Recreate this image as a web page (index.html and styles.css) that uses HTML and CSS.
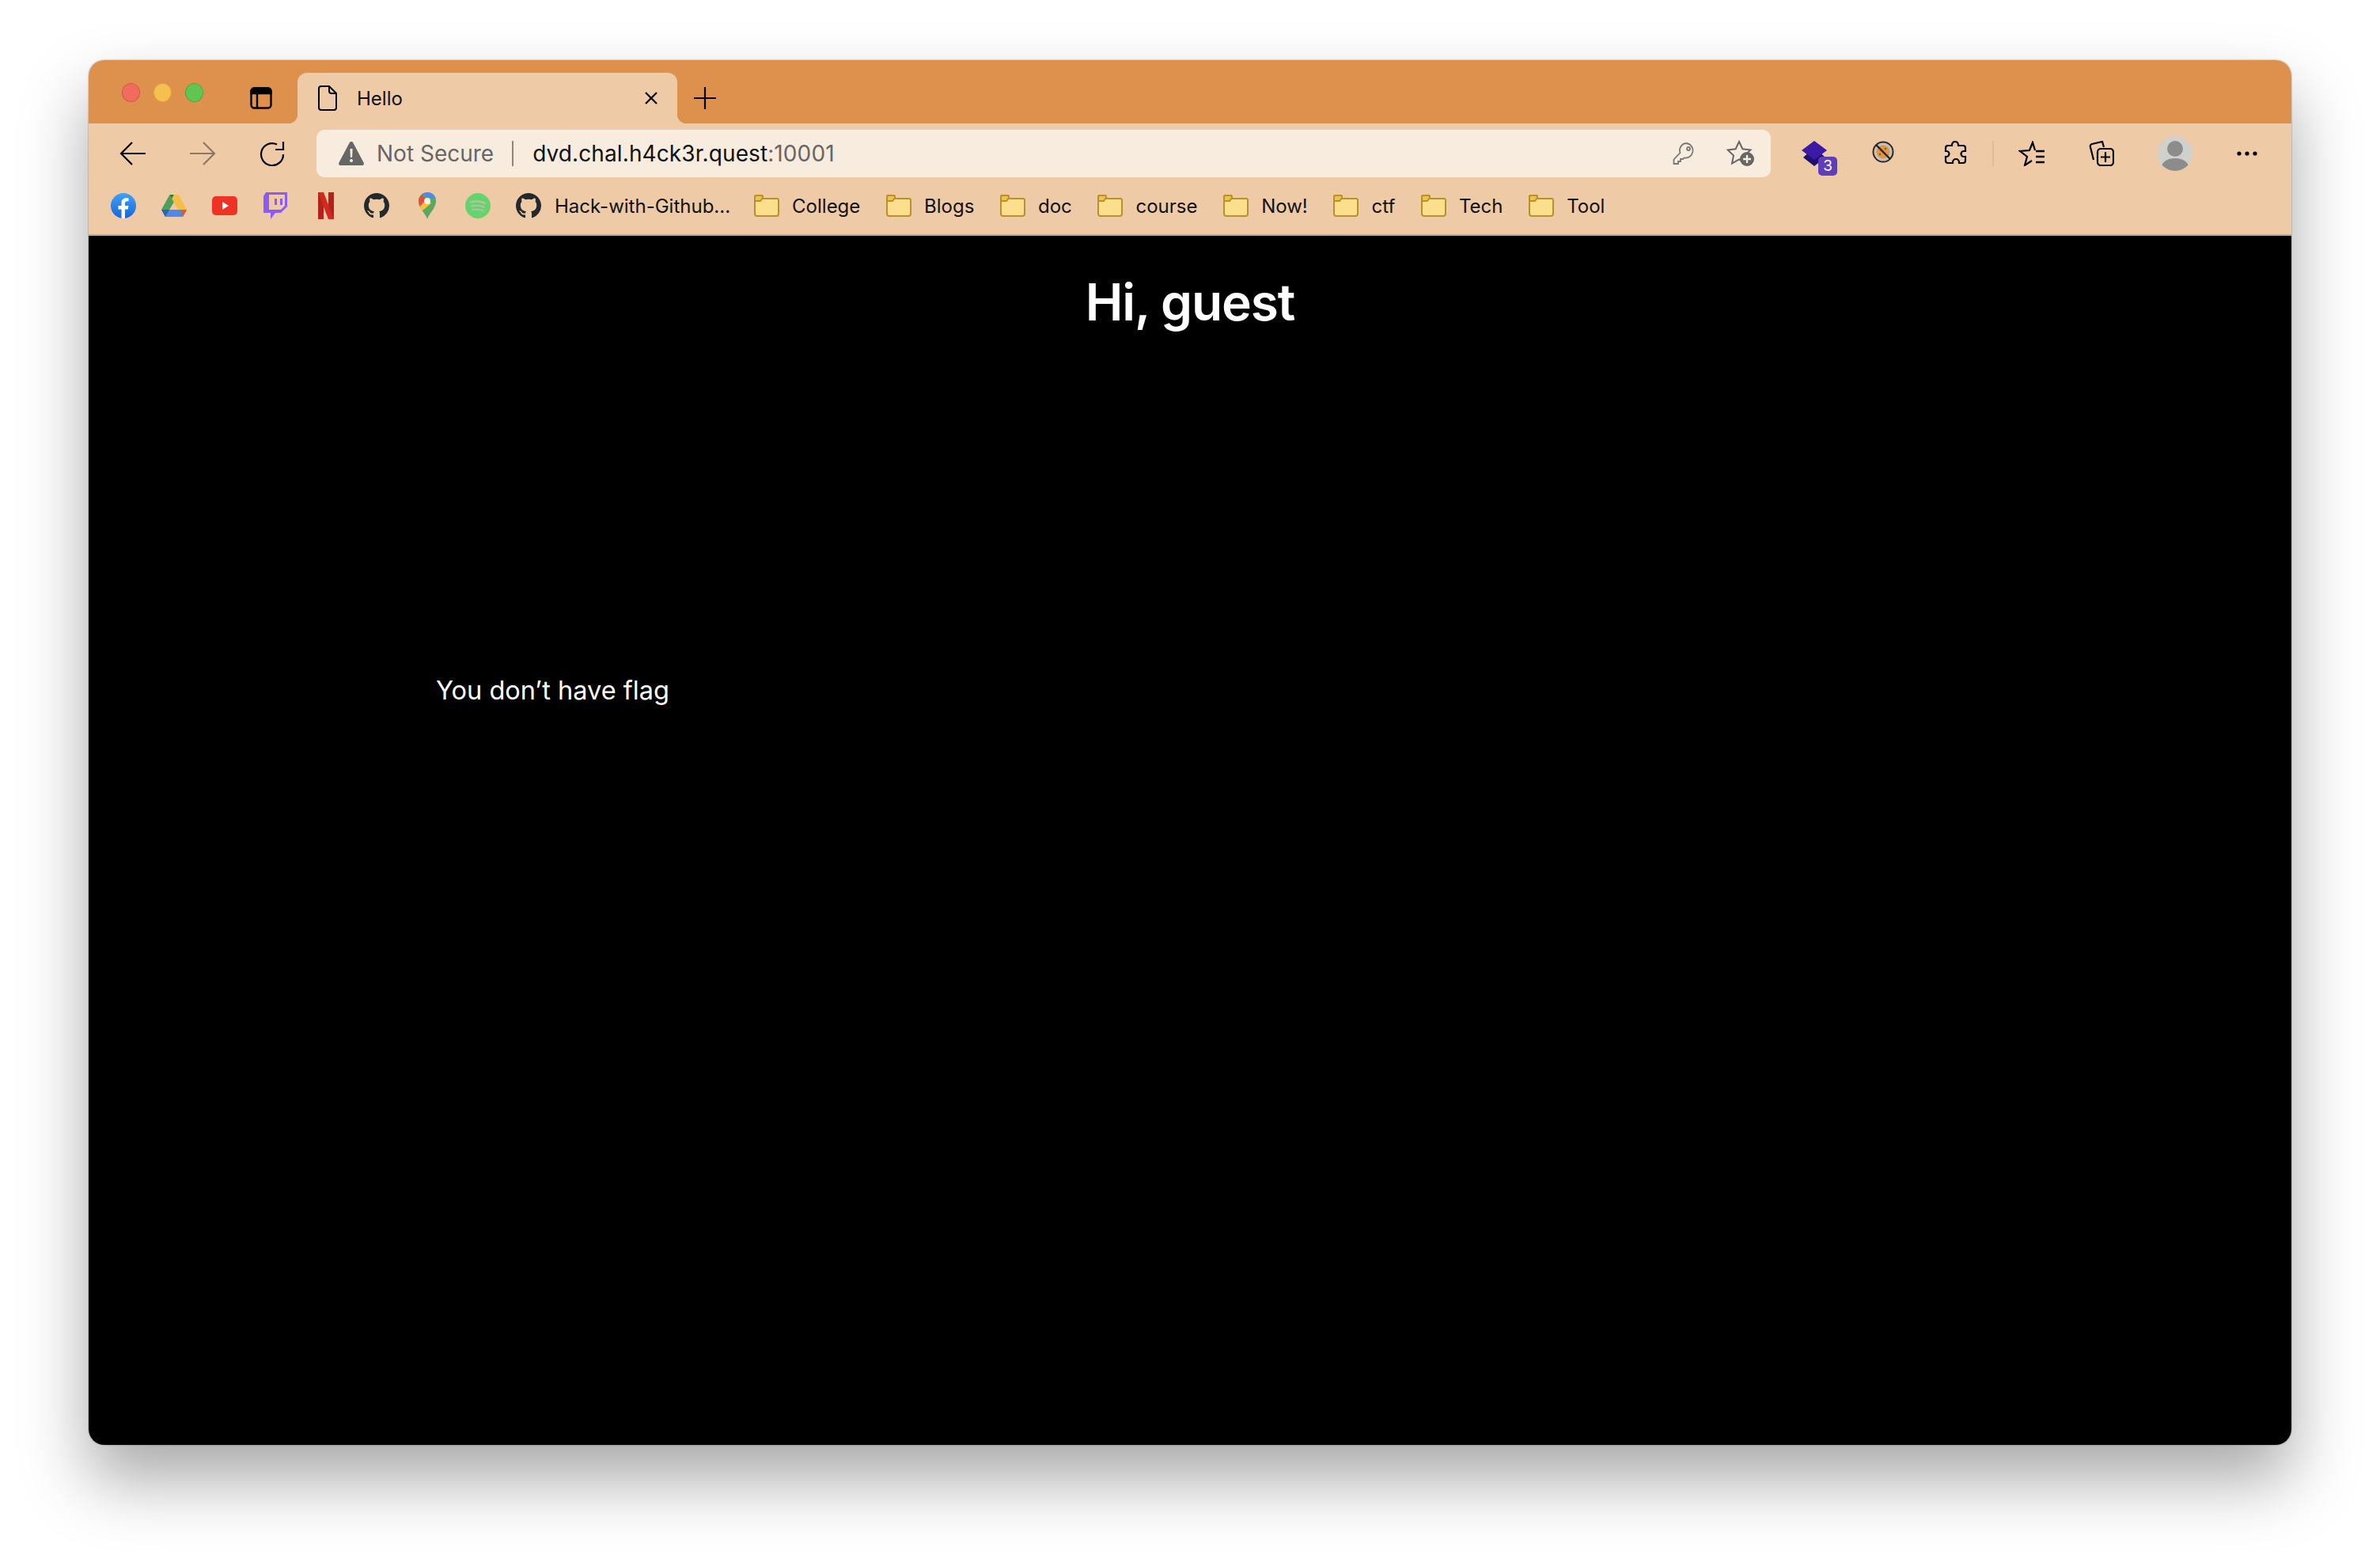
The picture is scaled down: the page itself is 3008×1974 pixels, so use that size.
FILE: index.html

```html
<!DOCTYPE html>
<html lang="en">
<head>
  <meta charset="UTF-8" />
  <title>Hello</title>
  <link rel="stylesheet" href="styles.css">
</head>
<body>

  <svg class="defs" width="0" height="0">
    <symbol id="github" viewBox="0 0 16 16">
      <path fill="#24292e" fill-rule="evenodd" d="M8 0C3.58 0 0 3.58 0 8c0 3.54 2.29 6.53 5.47 7.59.4.07.55-.17.55-.38 0-.19-.01-.82-.01-1.49-2.01.37-2.53-.49-2.69-.94-.09-.23-.48-.94-.82-1.13-.28-.15-.68-.52-.01-.53.63-.01 1.08.58 1.23.82.72 1.21 1.87.87 2.33.66.07-.52.28-.87.51-1.07-1.78-.2-3.64-.89-3.64-3.95 0-.87.31-1.59.82-2.15-.08-.2-.36-1.02.08-2.12 0 0 .67-.21 2.2.82.64-.18 1.32-.27 2-.27.68 0 1.36.09 2 .27 1.53-1.04 2.2-.82 2.2-.82.44 1.1.16 1.92.08 2.12.51.56.82 1.27.82 2.15 0 3.07-1.87 3.75-3.65 3.95.29.25.54.73.54 1.48 0 1.07-.01 1.93-.01 2.2 0 .21.15.46.55.38A8.013 8.013 0 0016 8c0-4.42-3.58-8-8-8z"/>
    </symbol>
    <symbol id="folder" viewBox="0 0 32 28">
      <path fill="#fbdf8c" stroke="#b8912f" stroke-width="2" d="M2 5h27a2 2 0 0 1 2 2v17a3 3 0 0 1-3 3H4a3 3 0 0 1-3-3V3a2 2 0 0 1 2-2h6a2 2 0 0 1 2 2v2"/>
      <path fill="#efc24e" stroke="#b8912f" stroke-width="2" d="M1 8V3a2 2 0 0 1 2-2h6a2 2 0 0 1 2 2l0 1-3 4z"/>
    </symbol>
  </svg>

  <div class="window">

    <div class="titlebar">
      <div class="lights">
        <span class="light red"></span>
        <span class="light yellow"></span>
        <span class="light green"></span>
      </div>
      <svg class="sidebar-icon" width="28" height="28" viewBox="0 0 28 28" fill="none" stroke="#000" stroke-width="2.4">
        <rect x="1.5" y="1.5" width="25" height="25" rx="4"/>
        <path d="M1.5 8h25V5a3.5 3.5 0 0 0-3.5-3.5H5A3.5 3.5 0 0 0 1.500 5z" fill="#000"/>
        <path d="M9 8v18"/>
      </svg>
      <div class="tab">
        <svg width="24" height="32" viewBox="0 0 24 32" fill="none" stroke="#000" stroke-width="2">
          <path d="M4 1h10l9 9v18a3 3 0 0 1-3 3H4a3 3 0 0 1-3-3V4a3 3 0 0 1 3-3z"/>
          <path d="M14 1v6a3 3 0 0 0 3 3h6"/>
        </svg>
        <span class="tab-title">Hello</span>
        <svg class="tab-close" width="18" height="18" viewBox="0 0 18 18" stroke="#000" stroke-width="2.200">
          <path d="M2 2l14 14M16 2L2 16"/>
        </svg>
      </div>
      <svg class="new-tab" width="28" height="28" viewBox="0 0 28 28" stroke="#000" stroke-width="2.200">
        <path d="M14 0v28M0 14h28"/>
      </svg>
    </div>

    <div class="toolbar">
      <div class="nav-btn">
        <svg width="34" height="30" viewBox="0 0 34 30" fill="none" stroke="#000" stroke-width="2.200">
          <path d="M33 15H2M16 1L2 15l14 14"/>
        </svg>
      </div>
      <div class="nav-btn">
        <svg width="34" height="30" viewBox="0 0 34 30" fill="none" stroke="#8d7762" stroke-width="2.200">
          <path d="M1 15h31M18 1l14 14-14 14"/>
        </svg>
      </div>
      <div class="nav-btn">
        <svg width="32" height="32" viewBox="0 0 32 32" fill="none" stroke="#000" stroke-width="2.200">
          <path d="M22 4.500A14 14 0 1 0 30 17"/>
          <path d="M30 1v10H20"/>
        </svg>
      </div>

      <div class="address">
        <svg width="32" height="30" viewBox="0 0 32 30">
          <path fill="#666" d="M16 0c1 0 1.800.5 2.300 1.400l13.300 25c.9 1.700-.2 3.600-2.200 3.600H2.600C.6 30-.5 28.100.4 26.400l13.300-25C14.200.5 15 0 16 0z"/>
          <path fill="#f8ecdf" d="M14.400 9h3.200l-.5 11h-2.200zM16 22a2 2 0 1 1 0 4 2 2 0 0 1 0-4z"/>
        </svg>
        <span class="not-secure">Not Secure</span>
        <span class="addr-sep"></span>
        <span class="url">dvd.chal.h4ck3r.quest<span class="port">:10001</span></span>
        <svg class="key" width="28" height="28" viewBox="0 0 28 28" fill="none" stroke="#777" stroke-width="1.800">
          <path d="M18 1a9 9 0 0 0-8.500 12L1.500 21.500V27H7v-3h3v-3h3l1.500-1.600A9 9 0 1 0 18 1z"/>
          <circle cx="20" cy="8" r="2"/>
        </svg>
        <svg class="star-add" width="36" height="34" viewBox="0 0 36 34">
          <path fill="none" stroke="#666" stroke-width="2" d="M16 2l4.400 9.300 10 1.200-7.400 7 2 10-9-5-9 5 2-10-7.400-7 10-1.200z"/>
          <circle cx="26" cy="24" r="9" fill="#666"/>
          <path stroke="#f8ecdf" stroke-width="2.400" d="M26 19v10M21 24h10"/>
        </svg>
      </div>

      <div class="tool w-ext">
        <svg width="32" height="32" viewBox="0 0 32 32">
          <path fill="#1f0f6e" d="M16 8l14 13-14 11L2 21z"/>
          <path fill="#3b1ba5" d="M16 0l16 12-16 12L0 12z"/>
        </svg>
        <span class="ext-badge">3</span>
      </div>
      <div class="tool w-block">
        <svg class="raised" width="28" height="28" viewBox="0 0 28 28" fill="none">
          <circle cx="14" cy="14" r="13" fill="#c9c2b8"/>
          <circle cx="14" cy="14" r="12.500" stroke="#2b2b2b" stroke-width="2"/>
          <circle cx="14" cy="14" r="8.500" fill="#e2964a"/>
          <path d="M5 5l18 18" stroke="#222" stroke-width="2.400"/>
          <circle cx="17" cy="10" r="1.300" fill="#7a5a38"/>
          <circle cx="10" cy="17" r="1.300" fill="#7a5a38"/>
        </svg>
      </div>
      <div class="tool w-puzzle">
        <svg width="30" height="32" viewBox="0 0 30 32" fill="none" stroke="#000" stroke-width="2.200">
          <path d="M11 5a4 4 0 0 1 8 0v1h6a3 3 0 0 1 3 3v4h-2a3.500 3.500 0 0 0 0 7h2v5a3 3 0 0 1-3 3h-5v-1a4 4 0 0 0-8 0v1H6a3 3 0 0 1-3-3v-5h1a3.500 3.500 0 0 0 0-7H3V9a3 3 0 0 1 3-3h5z"/>
        </svg>
      </div>
      <span class="tool-sep"></span>
      <div class="tool w-fav">
        <svg width="34" height="32" viewBox="0 0 34 32" fill="none" stroke="#000" stroke-width="2.200">
          <path d="M21 12l-3-10-4 10-12 1 9 7-3 11 9-6"/>
          <path d="M22 13h11M22 20h11M22 27h11" stroke-width="2.600"/>
        </svg>
      </div>
      <div class="tool w-coll">
        <svg width="32" height="32" viewBox="0 0 32 32" fill="none" stroke="#000" stroke-width="2.200">
          <path d="M6 24L2 8a3 3 0 0 1 2-4l13-3 2 7"/>
          <rect x="11" y="10" width="20" height="21" rx="4"/>
          <path d="M21 14v13M15 20.500h12"/>
        </svg>
      </div>
      <div class="tool w-avatar">
        <svg width="44" height="44" viewBox="0 0 44 44">
          <defs><clipPath id="avatarClip"><circle cx="22" cy="22" r="22"/></clipPath></defs>
          <circle cx="22" cy="22" r="22" fill="#d2d0cc"/>
          <g clip-path="url(#avatarClip)" fill="#8c8c8c">
            <ellipse cx="22" cy="16" rx="10" ry="10"/>
            <ellipse cx="22" cy="39" rx="17" ry="11"/>
          </g>
        </svg>
      </div>
      <div class="tool w-more">
        <svg width="26" height="6" viewBox="0 0 26 6" fill="#000">
          <circle cx="3" cy="3" r="2.600"/><circle cx="13" cy="3" r="2.600"/><circle cx="23" cy="3" r="2.600"/>
        </svg>
      </div>
    </div>

    <div class="bookmarks">
      <span class="bm-icon">
        <svg width="32" height="32" viewBox="0 0 32 32">
          <defs>
            <linearGradient id="fbGrad" x1="0" y1="0" x2="0" y2="1"><stop offset="0" stop-color="#3ea2f6"/><stop offset="1" stop-color="#1a66d6"/></linearGradient>
            <clipPath id="fbClip"><circle cx="16" cy="16" r="16"/></clipPath>
          </defs>
          <circle cx="16" cy="16" r="16" fill="url(#fbGrad)"/>
          <path clip-path="url(#fbClip)" fill="#fff" d="M13.500 32V20.500H9.500V16h4v-3.600c0-4 2.400-6.200 6-6.200 1.700 0 3 .2 3 .2v3.900h-1.900c-2 0-2.600 1.200-2.600 2.500V16h4.400l-.7 4.500h-3.700V32z"/>
        </svg>
      </span>
      <span class="bm-icon">
        <svg width="32" height="28" viewBox="0 0 32 28">
          <path fill="#4f9e5c" d="M10.500 0L0 19l5 9 11-19z"/>
          <path fill="#f4bf45" d="M10.500 0h11L32 19H21z"/>
          <path fill="#4d8bea" d="M5 28h22l5-9H10.500z"/>
          <path fill="#2f7d43" d="M10.500 0h5.500l-3 5z"/>
          <path fill="#d95a3f" d="M27 28l5-9h-7z"/>
          <path fill="#2f62b8" d="M5 28l5.500-9H0z"/>
        </svg>
      </span>
      <span class="bm-icon">
        <svg width="32" height="24" viewBox="0 0 32 24">
          <rect width="32" height="24" rx="5" fill="#ee3224"/>
          <path fill="#fff" d="M13 7l8 5-8 5z"/>
        </svg>
      </span>
      <span class="bm-icon">
        <svg width="30" height="34" viewBox="0 0 30 34">
          <path fill="#8c5bf5" d="M3 0h27v18l-8 8h-7l-6 8v-8H0V5z"/>
          <path fill="#eecaa6" d="M7 3h20v14l-5 5H7z"/>
          <path fill="#8c5bf5" d="M14 8h3v8h-3zM21 8h3v8h-3z"/>
        </svg>
      </span>
      <span class="bm-icon">
        <svg width="20" height="34" viewBox="0 0 20 34">
          <path fill="#b3231c" d="M0 0h7v34H0zM13 0h7v34h-7z"/>
          <path fill="#d12b21" d="M0 0h7l13 34h-7z"/>
        </svg>
      </span>
      <span class="bm-icon"><svg width="32" height="32"><use href="#github"/></svg></span>
      <span class="bm-icon">
        <svg width="22" height="34" viewBox="0 0 22 34">
          <path fill="#5aa85f" d="M11 34C9 27 0 20 0 11a11 11 0 0 1 22 0c0 9-9 16-11 23z"/>
          <path fill="#4d8bea" d="M4 3a11 11 0 0 1 18 5l-8-1z"/>
          <path fill="#e2523f" d="M4 3l6 6-8 9C0 15 0 13 0 11c0-3 1.500-6 4-8z"/>
          <path fill="#f5c33f" d="M10 9l6 5-12 10c-1-2-2-4-2-6z"/>
          <circle cx="11" cy="11" r="4" fill="#fff" opacity=".85"/>
        </svg>
      </span>
      <span class="bm-icon">
        <svg width="32" height="32" viewBox="0 0 32 32" fill="none" stroke="#a9c79a" stroke-linecap="round">
          <circle cx="16" cy="16" r="16" fill="#67d36f" stroke="none"/>
          <path d="M7 11.500c6-1.800 13-1.200 18 1.500" stroke-width="2.600"/>
          <path d="M8 16.500c5-1.400 11-1 16 1.400" stroke-width="2.300"/>
          <path d="M9 21c4.500-1 9.500-.8 14 1.200" stroke-width="2"/>
        </svg>
      </span>
      <span class="bm-link gh-link">
        <span class="bm-icon"><svg width="32" height="32"><use href="#github"/></svg></span>
        <span class="bm-text">Hack-with-Github...</span>
      </span>
      <span class="bm-link folder-link"><svg width="32" height="28"><use href="#folder"/></svg><span class="bm-text">College</span></span>
      <span class="bm-link folder-link"><svg width="32" height="28"><use href="#folder"/></svg><span class="bm-text">Blogs</span></span>
      <span class="bm-link folder-link"><svg width="32" height="28"><use href="#folder"/></svg><span class="bm-text">doc</span></span>
      <span class="bm-link folder-link"><svg width="32" height="28"><use href="#folder"/></svg><span class="bm-text">course</span></span>
      <span class="bm-link folder-link"><svg width="32" height="28"><use href="#folder"/></svg><span class="bm-text">Now!</span></span>
      <span class="bm-link folder-link"><svg width="32" height="28"><use href="#folder"/></svg><span class="bm-text">ctf</span></span>
      <span class="bm-link folder-link"><svg width="32" height="28"><use href="#folder"/></svg><span class="bm-text">Tech</span></span>
      <span class="bm-link folder-link"><svg width="32" height="28"><use href="#folder"/></svg><span class="bm-text">Tool</span></span>
    </div>

    <div class="page">
      <h1>Hi, guest</h1>
      <p>You don’t have flag</p>
    </div>

  </div>

</body>
</html>
```

FILE: styles.css

```css
html, body {
  margin: 0;
  height: 100%;
}
body {
  background: #fff;
  font-family: Inter, "Liberation Sans", sans-serif;
  padding: 76px 112px 148px;
  box-sizing: border-box;
  overflow: hidden;
}
.defs {
  position: absolute;
}
svg {
  display: block;
  flex: none;
}
.window {
  height: 1750px;
  border-radius: 20px;
  overflow: hidden;
  display: flex;
  flex-direction: column;
  box-shadow: 0 44px 84px rgba(0,0,0,0.34), 0 0 2px rgba(0,0,0,0.45);
}

/* title bar */
.titlebar {
  height: 80px;
  background: #dd914d;
  display: flex;
  align-items: flex-end;
  flex: none;
}
.lights {
  display: flex;
  gap: 17px;
  margin: 0 0 27px 42px;
}
.light {
  width: 23px;
  height: 24px;
  border-radius: 50%;
  box-sizing: border-box;
}
.red { background: #f16b60; border: 1px solid #d9534a; }
.yellow { background: #f6c04f; border: 1px solid #dea63c; }
.green { background: #61c554; border: 1px solid #4ea840; }
.sidebar-icon {
  margin: 0 32px 18px 59px;
}
.tab {
  width: 480px;
  height: 64px;
  background: #eecaa6;
  border-radius: 12px 12px 0 0;
  display: flex;
  align-items: center;
  padding: 0 24px 0 26px;
  box-sizing: border-box;
  position: relative;
}
.tab::before, .tab::after {
  content: "";
  position: absolute;
  bottom: 0;
  width: 12px;
  height: 12px;
}
.tab::before {
  left: -12px;
  background: radial-gradient(circle at 0 0, transparent 12px, #eecaa6 12.500px);
}
.tab::after {
  right: -12px;
  background: radial-gradient(circle at 100% 0, transparent 12px, #eecaa6 12.500px);
}
.tab-title {
  font-size: 24px;
  color: #111;
  margin-left: 25px;
}
.tab-close {
  margin-left: auto;
}
.new-tab {
  margin: 0 0 18px 21px;
}

/* toolbar */
.toolbar {
  height: 76px;
  background: #eecaa6;
  display: flex;
  align-items: center;
  padding: 0 0 0 12px;
  flex: none;
}
.nav-btn {
  width: 88px;
  display: flex;
  justify-content: center;
}
.address {
  width: 1838px;
  height: 60px;
  margin-left: 12px;
  background: #f8ecdf;
  border-radius: 10px;
  display: flex;
  align-items: center;
  padding: 0 20px 0 28px;
  box-sizing: border-box;
}
.not-secure {
  font-size: 28px;
  color: #666;
  margin-left: 16px;
}
.addr-sep {
  width: 2px;
  height: 32px;
  background: #8f8578;
  margin: 0 24px 0 23px;
}
.url {
  font-size: 28px;
  color: #111;
  letter-spacing: 0.1px;
}
.port {
  color: #666;
}
.key {
  margin-left: auto;
}
.star-add {
  margin-left: 40px;
}
.tool {
  display: flex;
  justify-content: center;
  position: relative;
}
.w-ext { width: 110px; }
.w-block { width: 64px; }
.w-puzzle { width: 94px; margin-left: 12px; }
.w-fav { width: 96px; }
.w-coll { width: 80px; }
.w-avatar { width: 105px; }
.w-more { width: 78px; }
.raised {
  margin-top: -4px;
}
.ext-badge {
  position: absolute;
  left: 60px;
  top: 20px;
  width: 24px;
  height: 24px;
  border-radius: 5px;
  background: #5e3fb8;
  color: #fff;
  font-size: 19px;
  line-height: 24px;
  text-align: center;
}
.tool-sep {
  width: 2px;
  height: 32px;
  background: #dfbc98;
}

/* bookmarks */
.bookmarks {
  height: 56px;
  background: #eecaa6;
  border-bottom: 2px solid #c4a98b;
  display: flex;
  align-items: center;
  padding: 0 0 8px 12px;
  flex: none;
}
.bm-icon {
  width: 64px;
  display: flex;
  justify-content: center;
  flex: none;
}
.bm-link {
  display: flex;
  align-items: center;
}
.gh-link {
  margin-right: 30px;
}
.folder-link {
  margin-right: 32.7px;
}
.folder-link svg {
  margin-right: 16px;
}
.gh-link .bm-icon {
  margin-right: 1px;
}
.bm-text {
  font-size: 24px;
  color: #111;
}

/* page */
.page {
  flex: 1;
  background: #000;
  color: #fff;
}
.page h1 {
  font-size: 64px;
  font-weight: 600;
  letter-spacing: -1.1px;
  text-align: center;
  margin: 44px 0 0;
  line-height: 80px;
}
.page p {
  font-size: 32.5px;
  margin: 429px 0 0 439px;
  line-height: 44px;
}
```
